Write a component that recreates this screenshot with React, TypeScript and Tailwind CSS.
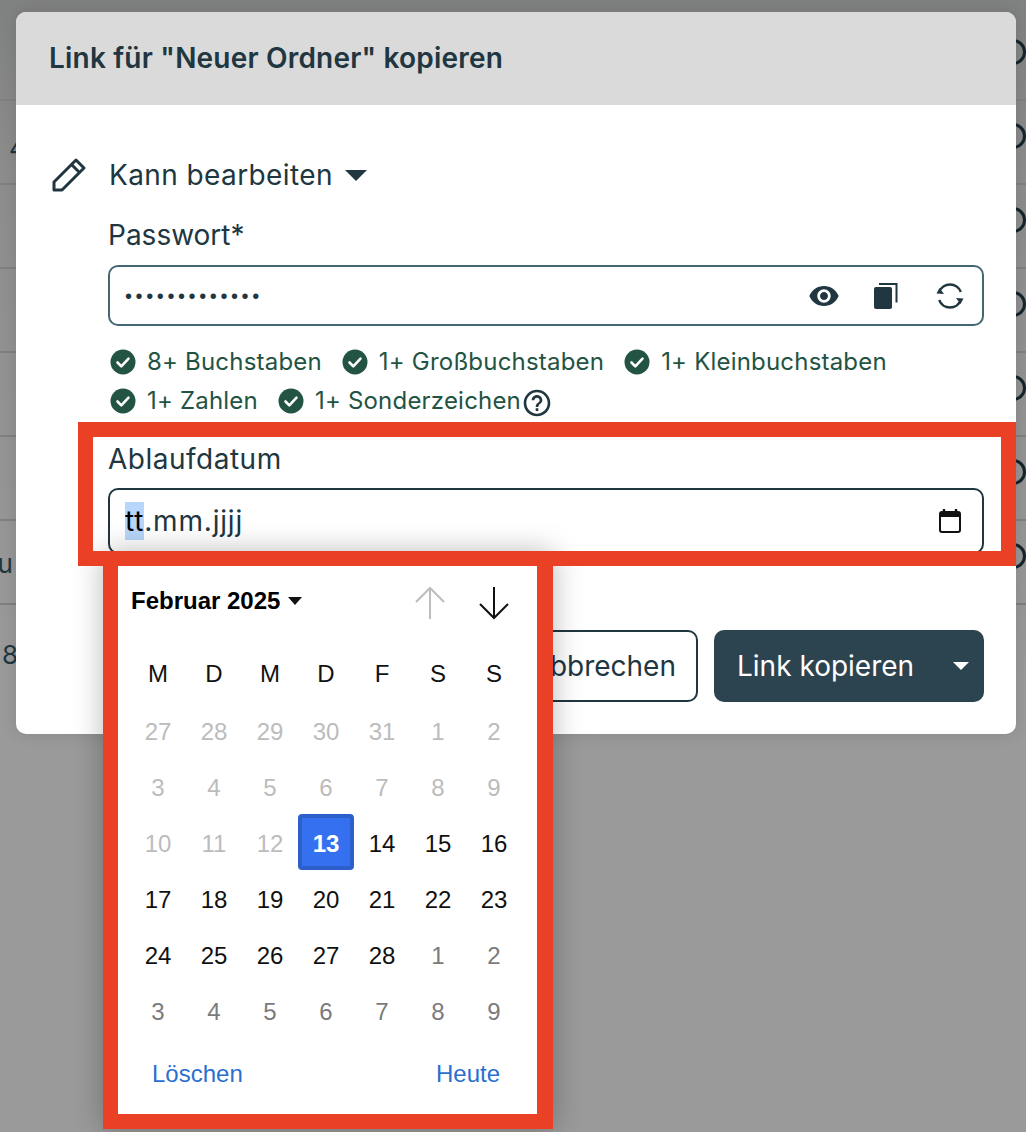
import React from "react";
import { MdVisibility, MdHelpOutline } from "react-icons/md";

const inkColor = "text-[#203640]";

const weeks = [
  [27, 28, 29, 30, 31, 1, 2],
  [3, 4, 5, 6, 7, 8, 9],
  [10, 11, 12, 13, 14, 15, 16],
  [17, 18, 19, 20, 21, 22, 23],
  [24, 25, 26, 27, 28, 1, 2],
  [3, 4, 5, 6, 7, 8, 9],
];

const backgroundRows = [
  { text: "4", className: "mt-[22px] ml-[9px]" },
  { text: "", className: "" },
  { text: "", className: "" },
  { text: "", className: "" },
  { text: ":", className: "mt-[12px] -ml-[6px]" },
  { text: "au", className: "mt-[14px] -ml-[17px]" },
];

const CheckIcon = () => (
  <svg width="26" height="26" viewBox="0 0 26 26" className="shrink-0">
    <circle cx="13" cy="13" r="12.5" fill="#235342" />
    <path d="M7.5 13.5l3.8 3.8 7.2-7.6" fill="none" stroke="#fff" strokeWidth="2.6" strokeLinecap="round" strokeLinejoin="round" />
  </svg>
);

const Rule = ({ label, help }: { label: string; help?: boolean }) => (
  <div className="flex items-center gap-[11px]">
    <CheckIcon />
    <span className="text-[24px] leading-[38px] tracking-[0.2px] text-[#235342]">{label}</span>
    {help && <MdHelpOutline className="-ml-[11px] mt-[3px] text-[#203640]" size={32} />}
  </div>
);

const DayCell = ({ day, week, index }: { day: number; week: number; index: number }) => {
  const disabled = week < 2 || (week === 2 && index < 3);
  const selected = week === 2 && index === 3;
  const outside = (week === 4 && index > 4) || week === 5;
  if (selected) {
    return (
      <div className="flex h-[56px] items-center justify-center rounded-[4px] border-[4px] border-[#2c5fc9] bg-[#3470f0] pt-[3px] text-[24px] font-bold text-white">
        {day}
      </div>
    );
  }
  return (
    <div
      className={
        "flex h-[56px] items-center justify-center pt-[3px] text-[24px] " +
        (disabled ? "text-[#bcbcbc]" : outside ? "text-[#7b7b7b]" : "text-[#111]")
      }
    >
      {day}
    </div>
  );
};

const Calendar = () => (
  <div className="absolute left-[103px] top-[552px] h-[577px] w-[450px] border-b-[15px] border-l-[15px] border-r-[16px] border-[#ea4025] bg-white font-['Liberation_Sans',sans-serif] shadow-[0_0_28px_rgba(0,0,0,0.28)]">
    <div className="flex h-[94px] items-end justify-between pl-[13px] pr-[27px]">
      <div className="mb-[27px] flex items-center gap-[8px] text-[24px] font-bold text-black">
        Februar 2025
        <svg width="14" height="8" viewBox="0 0 14 8">
          <path d="M0 0h14L7 8z" fill="#111" />
        </svg>
      </div>
      <div className="mb-[26px] flex items-center gap-[32px]">
        <svg width="32" height="34" viewBox="0 0 32 34" fill="none" stroke="#bdbdbd" strokeWidth="2">
          <path d="M16 33V2M2 16L16 2l14 14" />
        </svg>
        <svg width="32" height="34" viewBox="0 0 32 34" fill="none" stroke="#111" strokeWidth="2">
          <path d="M16 1v31M2 18l14 14 14-14" />
        </svg>
      </div>
    </div>
    <div className="grid grid-cols-7 pl-[12px] pr-[15px]">
      {["M", "D", "M", "D", "F", "S", "S"].map((d, i) => (
        <div key={i} className="flex h-[56px] items-center justify-center text-[24px] text-[#111]">
          {d}
        </div>
      ))}
      {weeks.map((week, w) =>
        week.map((day, i) => <DayCell key={w + "-" + i} day={day} week={w} index={i} />)
      )}
    </div>
    <div className="mt-[18px] flex justify-between pl-[34px] pr-[37px] text-[24px] text-[#2a6fd0]">
      <span>Löschen</span>
      <span>Heute</span>
    </div>
  </div>
);

const App = () => {
  return (
    <div className="relative h-[1132px] w-[1026px] overflow-hidden bg-linear-to-b from-[#808181] via-[#8d8d8d] via-15% to-[#9a9a9a] to-60% font-['Inter',sans-serif]">
      {/* table behind the dialog */}
      <div className="flex h-[101px] items-center justify-end border-b-[2px] border-[#808080] pt-[4px]">
        <span className="h-[26px] w-[26px] rounded-full border-[3px] border-[#15252c]" />
      </div>
      {backgroundRows.map((row, r) => (
        <div
          key={r}
          className="flex h-[84px] items-center justify-between border-b-[2px] border-[#808080] pb-[12px] text-[26px] text-[#203640]"
        >
          <span className={row.className}>{row.text}</span>
          <span className="h-[26px] w-[26px] rounded-full border-[3px] border-[#15252c]" />
        </div>
      ))}
      <div className="mt-[30px] pl-[2px] text-[26px] text-[#203640]">8</div>

      {/* dialog */}
      <div className="absolute left-[16px] top-[12px] h-[722px] w-[1000px] overflow-hidden rounded-[10px] bg-white shadow-[0_0_16px_rgba(0,0,0,0.12)]">
        <div className={"flex h-[93px] items-center bg-[#dadada] pb-[2px] pl-[33px] text-[28px] font-semibold tracking-[0.2px] " + inkColor}>
          Link für "Neuer Ordner" kopieren
        </div>
        <div className={"pl-[33px] pr-[32px] " + inkColor}>
          <div className="mt-[52px] flex h-[36px] items-center">
            <svg width="36" height="36" viewBox="0 0 36 36" className="ml-[2px] mr-[22px]">
              <path
                d="M25 3l8 8L11 33H3v-8zM20.5 7.5l8 8"
                fill="none"
                stroke="#203640"
                strokeWidth="3"
                strokeLinejoin="round"
              />
            </svg>
            <span className="text-[28px] leading-[36px] tracking-[0.4px]">Kann bearbeiten</span>
            <svg width="22" height="11" viewBox="0 0 22 11" className="ml-[12px]">
              <path d="M0 0h22L11 11z" fill="#203640" />
            </svg>
          </div>

          <div className="ml-[59px]">
            <div className="mt-[25px] text-[28px] leading-[34px]">Passwort*</div>
            <div className="mt-[13px] flex h-[61px] items-center rounded-[10px] border-[2px] border-[#456673] pl-[15px] pr-[18px]">
              <span className="flex-1 font-['Liberation_Sans',sans-serif] text-[20px] tracking-[3.6px]">•••••••••••••</span>
              <MdVisibility size={32} className="mr-[34px]" />
              <svg width="24" height="26" viewBox="0 0 24 26" className="mr-[38px]">
                <path d="M5 1h17.5v18.5" fill="none" stroke="#203640" strokeWidth="2" />
                <rect x="0" y="4" width="18" height="22" rx="2" fill="#203640" />
              </svg>
              <svg width="28" height="28" viewBox="0 0 28 28" fill="none" stroke="#203640" strokeWidth="2.4">
                <path d="M3.2 10A11.5 11.5 0 0 1 24.8 10" />
                <path d="M24.8 18A11.5 11.5 0 0 1 3.2 18" />
                <path d="M0.5 11.5L8 12 3.5 6z" fill="#203640" stroke="none" />
                <path d="M27.5 16.5L20 16l4.5 6z" fill="#203640" stroke="none" />
              </svg>
            </div>

            <div className="mt-[17px] flex gap-[20px] pl-[2px]">
              <Rule label="8+ Buchstaben" />
              <Rule label="1+ Großbuchstaben" />
              <Rule label="1+ Kleinbuchstaben" />
            </div>
            <div className="mt-[1px] flex gap-[20px] pl-[2px]">
              <Rule label="1+ Zahlen" />
              <Rule label="1+ Sonderzeichen" help />
            </div>

            <div className="mt-[22px] text-[28px] leading-[34px] tracking-[0.5px]">Ablaufdatum</div>
            <div className="mt-[12px] flex h-[66px] items-center justify-between rounded-[10px] border-[2px] border-[#203640] pl-[15px] pr-[21px]">
              <span className="text-[28px] leading-[38px] tracking-[0.8px]">
                <span className="inline-block bg-[#b8d5fb] text-black">tt</span>.mm.jjjj
              </span>
              <svg width="22" height="24" viewBox="0 0 22 24" fill="none">
                <path d="M5 0v4M17 0v4" stroke="#111" strokeWidth="2.4" />
                <rect x="1" y="3" width="20" height="20" rx="2" stroke="#111" strokeWidth="2" />
                <rect x="1" y="3" width="20" height="5" fill="#111" />
              </svg>
            </div>
          </div>

          <div className="mt-[76px] flex justify-end gap-[16px]">
            <button className="flex h-[72px] items-center rounded-[10px] border-[2px] border-[#203640] pl-[24px] pr-[20px] text-[28px]">
              Abbrechen
            </button>
            <button className="flex h-[72px] w-[270px] items-center justify-between rounded-[10px] bg-[#2c4350] pl-[23px] pr-[15px] text-[28px] text-white">
              Link kopieren
              <svg width="16" height="8" viewBox="0 0 16 8">
                <path d="M0 0h16L8 8z" fill="#fff" />
              </svg>
            </button>
          </div>
        </div>
      </div>

      <Calendar />
      {/* annotation frame around the date field */}
      <div className="absolute left-[78px] top-[422px] h-[144px] w-[938px] border-[15px] border-[#ea4025]" />
    </div>
  );
};

export default App;
